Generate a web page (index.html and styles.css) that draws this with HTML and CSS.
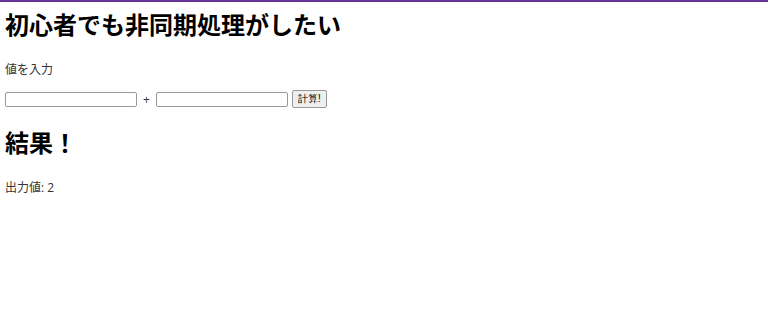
FILE: index.html
```html
<!DOCTYPE html>
<html lang="ja">
<head>
  <meta charset="UTF-8">
  <title>非同期処理</title>
  <link rel="stylesheet" href="styles.css">
</head>
<body>
  <h1>初心者でも非同期処理がしたい</h1>
  <p>値を入力</p>
  <div class="form">
    <input type="text" id="a">
    <span class="plus">+</span>
    <input type="text" id="b">
    <button>計算!</button>
  </div>
  <h2>結果！</h2>
  <p>出力値: 2</p>
</body>
</html>
```

FILE: styles.css
```css
html {
  border-top: 2px solid #663399;
}
body {
  font-family: "Open Sans", "Noto Sans CJK JP", sans-serif;
  font-size: 12px;
  color: #333;
  margin: 0 5px;
}
h1 {
  font-size: 24px;
  color: #000;
  margin: 4px 0 19px;
}
h2 {
  font-size: 24px;
  color: #000;
  margin: 16px 0 19px;
}
p {
  margin: 0;
}
.form {
  display: flex;
  align-items: center;
  margin-top: 12px;
}
.plus {
  width: 19px;
  text-align: center;
}
input {
  box-sizing: border-box;
  width: 132px;
  height: 15px;
  border: 1px solid #999;
  border-radius: 2px;
  padding: 0 2px;
  font-size: 11px;
}
button {
  box-sizing: border-box;
  height: 18px;
  margin-left: 4px;
  padding: 0 5px;
  font-size: 10px;
  border: 1px solid #999;
  border-radius: 2px;
  background: #efefef;
}
```
